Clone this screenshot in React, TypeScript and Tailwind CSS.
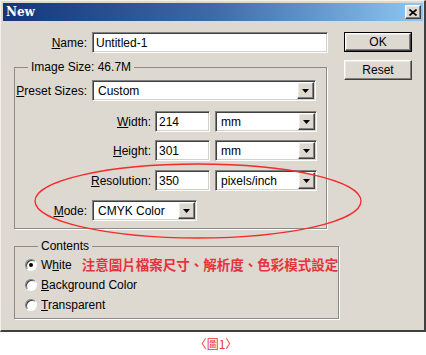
import React from "react";

const face = "bg-[#ddd8d0]";
const sunken =
  "border border-t-[#808080] border-l-[#808080] border-b-white border-r-white shadow-[inset_1px_1px_0_#404040,inset_-1px_-1px_0_#d4d0c8]";
const raised =
  "border border-t-white border-l-white border-b-[#404040] border-r-[#404040] shadow-[inset_-1px_-1px_0_#808080,inset_1px_1px_0_#ece9e2]";

function TextBox({ value, width }: { value: string; width: string }) {
  return (
    <div className={`${width} h-[21px] bg-white ${sunken} flex items-center pl-[3px] leading-none`}>
      {value}
    </div>
  );
}

function Select({ value, width }: { value: string; width: string }) {
  return (
    <div className={`${width} h-[21px] bg-white ${sunken} flex items-center p-[1px]`}>
      <span className="flex-1 pl-[4px] leading-none">{value}</span>
      <div className={`w-[17px] h-[17px] ${face} ${raised} flex items-center justify-center`}>
        <svg width="7" height="4" viewBox="0 0 7 4">
          <path d="M0 0h7L3.5 4z" fill="#000" />
        </svg>
      </div>
    </div>
  );
}

function Radio({ checked, children }: { checked?: boolean; children: React.ReactNode }) {
  return (
    <div className="h-[20px] flex items-center gap-[4px]">
      <div className="w-[12px] h-[12px] rounded-full bg-white border border-t-[#808080] border-l-[#808080] border-b-white border-r-white shadow-[inset_1px_1px_0_#404040] flex items-center justify-center">
        {checked && <div className="w-[4px] h-[4px] rounded-full bg-black" />}
      </div>
      <span className="leading-none">{children}</span>
    </div>
  );
}

function SizeRow({ label, value, unit, mt }: { label: React.ReactNode; value: string; unit: string; mt: string }) {
  return (
    <div className={`flex items-center ${mt}`}>
      <span className="w-[137px] text-right pr-[1px]">{label}</span>
      <div className="ml-[3px]">
        <TextBox value={value} width="w-[55px]" />
      </div>
      <div className="ml-[5px]">
        <Select value={unit} width="w-[102px]" />
      </div>
    </div>
  );
}

export default function App() {
  return (
    <div
      className="w-[426px] h-[355px] bg-white text-black text-[12px] overflow-hidden"
      style={{ fontFamily: '"Liberation Sans", Arial, sans-serif' }}
    >
      <div
        className={`relative w-[426px] h-[332px] ${face} border-t border-l border-t-[#f4f1ec] border-l-[#f4f1ec] border-r-2 border-b-2 border-r-[#404040] border-b-[#404040] pt-[2px] pl-[2px] pr-[1px]`}
      >
        {/* title bar */}
        <div className="h-[18px] flex items-center justify-between bg-gradient-to-r from-[#13367a] via-[#3e6aa8] to-[#8ec8f2] pl-[3px] pr-[2px]">
          <span className="text-white font-bold text-[12px]" style={{ fontFamily: '"DejaVu Serif", serif' }}>
            New
          </span>
          <div className={`w-[16px] h-[14px] ${face} ${raised} flex items-center justify-center`}>
            <svg width="8" height="7" viewBox="0 0 8 7">
              <path d="M0.5 0.5L7.5 6.5M7.5 0.5L0.5 6.5" stroke="#000" strokeWidth="1.6" />
            </svg>
          </div>
        </div>

        <div className="flex">
          {/* left column */}
          <div className="w-[325px]">
            <div className="flex items-center mt-[11px]">
              <span className="w-[85px] text-right pr-[1px]">
                <u>N</u>ame:
              </span>
              <div className="ml-[4px]">
                <TextBox value="Untitled-1" width="w-[236px]" />
              </div>
            </div>

            <fieldset className="ml-[11px] mt-[7px] w-[313px] border border-[#8a8a8a] shadow-[1px_1px_0_#fff] pb-[7px] pt-[6px]">
              <legend className="ml-[13px] px-[3px] leading-[14px]">Image Size: 46.7M</legend>
              <div className="flex items-center">
                <span className="w-[73px] text-right pr-[1px]">
                  <u>P</u>reset Sizes:
                </span>
                <div className="ml-[4px]">
                  <Select value="Custom" width="w-[224px]" />
                </div>
              </div>
              <SizeRow label={<><u>W</u>idth:</>} value="214" unit="mm" mt="mt-[10px]" />
              <SizeRow label={<><u>H</u>eight:</>} value="301" unit="mm" mt="mt-[8px]" />
              <SizeRow label={<><u>R</u>esolution:</>} value="350" unit="pixels/inch" mt="mt-[9px]" />
              <div className="flex items-center mt-[9px]">
                <span className="w-[73px] text-right pr-[1px]">
                  <u>M</u>ode:
                </span>
                <div className="ml-[4px]">
                  <Select value="CMYK Color" width="w-[105px]" />
                </div>
              </div>
            </fieldset>

            <fieldset className="ml-[11px] mt-[10px] w-[313px] border border-[#8a8a8a] shadow-[1px_1px_0_#fff] pl-[10px] pt-[2px] pb-[3px]">
              <legend className="ml-[13px] px-[3px] leading-[14px]">Contents</legend>
              <div className="flex items-center whitespace-nowrap">
                <Radio checked>
                  W<u>h</u>ite
                </Radio>
                <span
                  className="ml-[10px] text-[13.5px] font-bold text-[#e8323c] leading-none"
                  style={{ fontFamily: '"Noto Sans CJK TC", "Noto Sans CJK SC", sans-serif' }}
                >
                  注意圖片檔案尺寸、解析度、色彩模式設定
                </span>
              </div>
              <Radio>
                <u>B</u>ackground Color
              </Radio>
              <Radio>
                <u>T</u>ransparent
              </Radio>
            </fieldset>
          </div>

          {/* buttons */}
          <div className="ml-[16px] mt-[11px] flex flex-col gap-[8px]">
            <div className="w-[68px] h-[20px] border border-black">
              <div className={`h-full ${raised} flex items-center justify-center leading-none`}>OK</div>
            </div>
            <div className={`w-[68px] h-[20px] ${raised} flex items-center justify-center leading-none`}>Reset</div>
          </div>
        </div>

        <svg className="absolute left-0 top-0 pointer-events-none" width="426" height="332">
          <ellipse cx="197" cy="200" rx="163" ry="37" fill="none" stroke="#f52a2a" strokeWidth="1.3" />
        </svg>
      </div>

      <div
        className="h-[23px] flex items-center justify-center pl-[6px] text-[12px] text-[#e8323c]"
        style={{ fontFamily: '"Noto Sans CJK TC", sans-serif' }}
      >
        〈圖1〉
      </div>
    </div>
  );
}
